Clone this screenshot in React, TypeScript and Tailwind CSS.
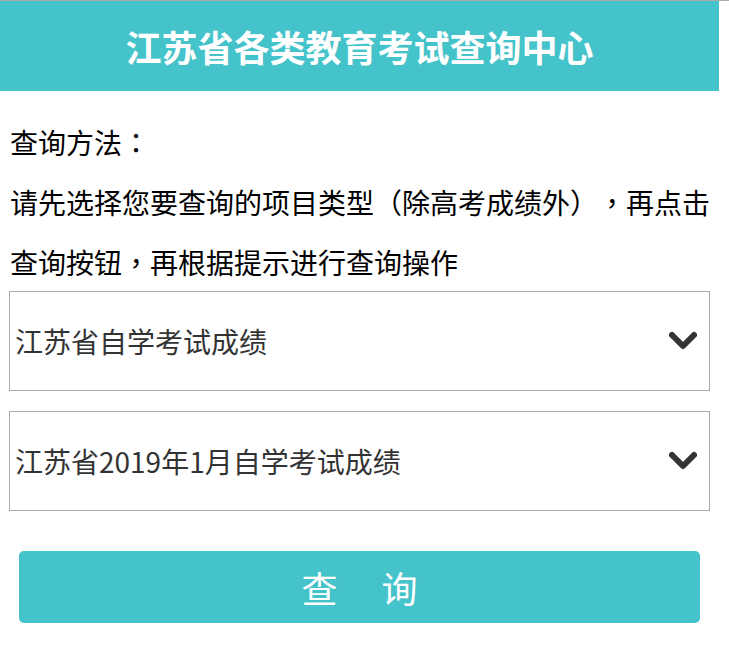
const font = { fontFamily: '"Noto Sans CJK SC", "Noto Sans", sans-serif' };

// centred full-width punctuation, as in the reference
function P({ c }: { c: string }) {
  return <span style={{ fontFamily: '"Noto Sans CJK TC", sans-serif' }}>{c}</span>;
}

function Chevron() {
  return (
    <svg width="28" height="20" viewBox="0 0 28 20" className="shrink-0">
      <polyline
        points="3,4 14,15 25,4"
        fill="none"
        stroke="#333"
        strokeWidth="6"
        strokeLinecap="round"
        strokeLinejoin="round"
      />
    </svg>
  );
}

function SelectBox({ label }: { label: string }) {
  return (
    <div className="h-[100px] border border-[#aaa] flex items-center justify-between pl-[5px] pr-[12px] bg-white">
      <span className="text-[28px] text-[#333] leading-none">{label}</span>
      <Chevron />
    </div>
  );
}

export default function App() {
  return (
    <div className="w-[729px] min-h-[652px] bg-white border-t border-[#aaa]" style={font}>
      <div className="w-[719px]">
        <div className="h-[90px] bg-[#45c3ca] flex items-center justify-center">
          <h1 className="text-white text-[36px] font-bold leading-none">江苏省各类教育考试查询中心</h1>
        </div>

        <div className="px-[9px]">
          <div className="pt-[21px] pl-px text-[28px] text-black [text-spacing-trim:space-all]">
            <div className="h-[60px] flex items-center">
              <span>查询方法<P c="：" /></span>
            </div>
            <div className="h-[60px] flex items-center whitespace-nowrap">
              <span>
                请先选择您要查询的项目类型<P c="（" />除高考成绩外<P c="）" /><P c="，" />再点击
              </span>
            </div>
            <div className="h-[60px] flex items-center">
              <span>查询按钮<P c="，" />再根据提示进行查询操作</span>
            </div>
          </div>

          <div className="flex flex-col gap-[20px] mt-[-1px]">
            <SelectBox label="江苏省自学考试成绩" />
            <SelectBox label="江苏省2019年1月自学考试成绩" />
          </div>

          <div className="px-[10px] pt-[40px]">
            <button className="w-full h-[72px] rounded-[5px] bg-[#45c3ca] text-white text-[36px] flex items-center justify-center gap-[44px]">
              <span>查</span>
              <span>询</span>
            </button>
          </div>
        </div>
      </div>
    </div>
  );
}
